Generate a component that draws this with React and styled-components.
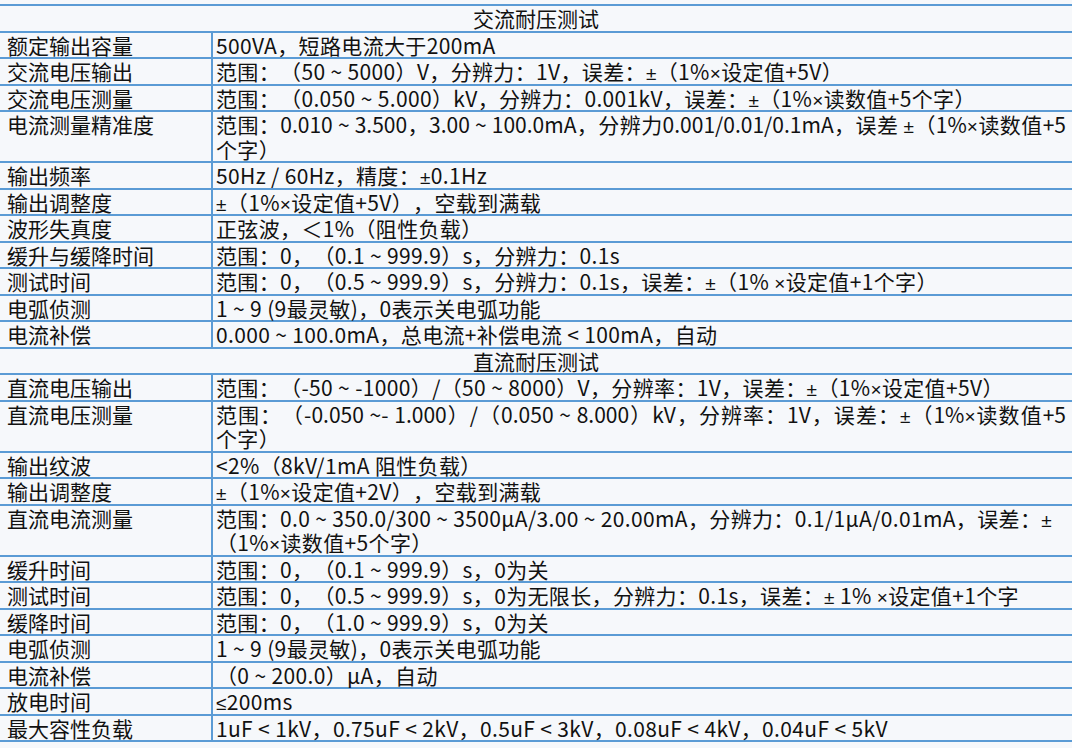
import React from 'react';
import styled, { createGlobalStyle } from 'styled-components';

const Global = createGlobalStyle`
  html, body {
    margin: 0;
    padding: 0;
    background: #f6f8fb;
  }
  body {
    font-family: "Noto Sans CJK SC", "Noto Sans", sans-serif;
    color: #111;
  }
`;

const Table = styled.div`
  width: 1072px;
  margin-top: 4px;
  border-bottom: 2px solid #5b9bd5;
  font-size: 21px;
  line-height: 24.5px;
  text-spacing-trim: space-all;
`;

const Header = styled.div`
  border-top: 2px solid #5b9bd5;
  text-align: center;
  height: 24.5px;
`;

const Row = styled.div`
  display: grid;
  grid-template-columns: 213px 1fr;
  border-top: 2px solid #5b9bd5;
`;

const Label = styled.div`
  padding-left: 7px;
  border-right: 2px solid #5b9bd5;
  white-space: nowrap;
`;

const Value = styled.div`
  padding-left: 3px;
  padding-right: 6px;
  min-width: 0;
`;

const Line = styled.span`
  display: block;
  height: 24.5px;
  text-align: left;
  text-align-last: ${(p) => (p.$justify ? 'justify' : 'left')};
  white-space: nowrap;
  letter-spacing: ${(p) => (p.$justify ? '0' : '0.35px')};
`;

/* ±, ×, ≤ are narrow Latin glyphs in the source, not full-width */
const Sym = styled.span`
  font-family: "Liberation Sans", sans-serif;
  font-size: 19px;
  line-height: 0;
`;

function withSyms(text) {
  return text.split(/([±×≤])/).map((part, i) =>
    /^[±×≤]$/.test(part) ? <Sym key={i}>{part}</Sym> : part
  );
}

const ac = [
  ['额定输出容量', ['500VA，短路电流大于200mA']],
  ['交流电压输出', ['范围：（50 ~ 5000）V，分辨力：1V，误差：±（1%×设定值+5V）']],
  ['交流电压测量', ['范围：（0.050 ~ 5.000）kV，分辨力：0.001kV，误差：±（1%×读数值+5个字）']],
  ['电流测量精准度', ['范围：0.010 ~ 3.500，3.00 ~ 100.0mA，分辨力0.001/0.01/0.1mA，误差 ±（1%×读数值+5', '个字）'], true],
  ['输出频率', ['50Hz / 60Hz，精度：±0.1Hz']],
  ['输出调整度', ['±（1%×设定值+5V），空载到满载']],
  ['波形失真度', ['正弦波，＜1%（阻性负载）']],
  ['缓升与缓降时间', ['范围：0，（0.1 ~ 999.9）s，分辨力：0.1s']],
  ['测试时间', ['范围：0，（0.5 ~ 999.9）s，分辨力：0.1s，误差：±（1% ×设定值+1个字）']],
  ['电弧侦测', ['1 ~ 9 (9最灵敏)，0表示关电弧功能']],
  ['电流补偿', ['0.000 ~ 100.0mA，总电流+补偿电流 < 100mA，自动']],
];

const dc = [
  ['直流电压输出', ['范围：（-50 ~ -1000）/（50 ~ 8000）V，分辨率：1V，误差：±（1%×设定值+5V）']],
  ['直流电压测量', ['范围：（-0.050 ~- 1.000）/（0.050 ~ 8.000）kV，分辨率：1V，误差：±（1%×读数值+5', '个字）'], true],
  ['输出纹波', ['<2%（8kV/1mA 阻性负载）']],
  ['输出调整度', ['±（1%×设定值+2V），空载到满载']],
  ['直流电流测量', ['范围：0.0 ~ 350.0/300 ~ 3500μA/3.00 ~ 20.00mA，分辨力：0.1/1μA/0.01mA，误差：±', '（1%×读数值+5个字）']],
  ['缓升时间', ['范围：0，（0.1 ~ 999.9）s，0为关']],
  ['测试时间', ['范围：0，（0.5 ~ 999.9）s，0为无限长，分辨力：0.1s，误差：± 1% ×设定值+1个字']],
  ['缓降时间', ['范围：0，（1.0 ~ 999.9）s，0为关']],
  ['电弧侦测', ['1 ~ 9 (9最灵敏)，0表示关电弧功能']],
  ['电流补偿', ['（0 ~ 200.0）μA，自动']],
  ['放电时间', ['≤200ms']],
  ['最大容性负载', ['1uF < 1kV，0.75uF < 2kV，0.5uF < 3kV，0.08uF < 4kV，0.04uF < 5kV']],
];

function SpecRow({ label, lines, justify }) {
  return (
    <Row>
      <Label>{label}</Label>
      <Value>
        {lines.map((l, i) => (
          <Line key={i} $justify={justify && i === 0}>{withSyms(l)}</Line>
        ))}
      </Value>
    </Row>
  );
}

export default function App() {
  return (
    <>
      <Global />
      <Table>
        <Header>交流耐压测试</Header>
        {ac.map(([label, lines, j]) => (
          <SpecRow key={'a' + label} label={label} lines={lines} justify={j} />
        ))}
        <Header>直流耐压测试</Header>
        {dc.map(([label, lines, j]) => (
          <SpecRow key={'d' + label} label={label} lines={lines} justify={j} />
        ))}
      </Table>
    </>
  );
}
